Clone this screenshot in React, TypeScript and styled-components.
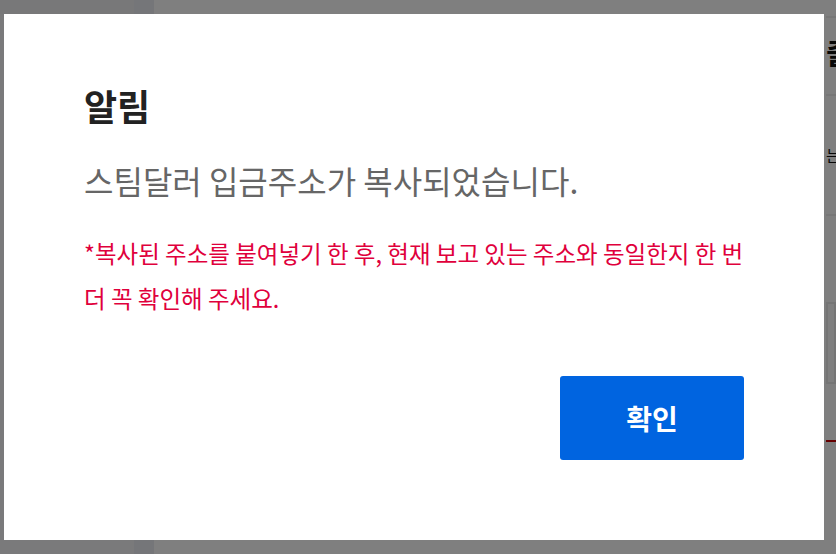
import React from "react";
import styled, { createGlobalStyle } from "styled-components";

const Global = createGlobalStyle`
  html, body { margin: 0; padding: 0; height: 100%; overflow: hidden; }
  body { font-family: "Noto Sans CJK KR", "Noto Sans", sans-serif; background: #fff; }
  #root { height: 100%; }
`;

const Page = styled.div`
  display: flex;
  height: 554px;
  width: 836px;
  overflow: hidden;
`;

const Sidebar = styled.div`
  width: 134px;
  flex: none;
  background: #f4f4f6;
  border-top: 14px solid #f0f0f2;
`;

const Gutter = styled.div`
  width: 20px;
  flex: none;
  background: #eaecf2;
`;

const Main = styled.div`
  flex: 1;
  display: flex;
  padding-left: 672px;
`;

const Panel = styled.div`
  width: 200px;
  flex: none;
  padding-top: 16px;
  display: flex;
  flex-direction: column;
`;

const HeadRow = styled.div`
  height: 80px;
  border-top: 2px solid #eee;
  border-bottom: 2px solid #eee;
  display: flex;
  align-items: center;
  font-size: 30px;
  font-weight: 700;
  color: #111;
  padding-bottom: 10px;
  box-sizing: border-box;
`;

const InfoRow = styled.div`
  height: 118px;
  border-bottom: 2px solid #eee;
  display: flex;
  align-items: center;
  font-size: 16px;
  color: #111;
`;

const BoxRow = styled.div`
  margin-top: 86px;
  height: 78px;
  border: 2px solid #eaeaea;
  border-right: none;
  display: flex;
`;

const BoxCell = styled.div`
  width: 6px;
  border-right: 2px solid #eaeaea;
`;

const RedLine = styled.div`
  margin-top: 56px;
  width: 20px;
  height: 2px;
  background: #c00;
`;

const Overlay = styled.div`
  position: fixed;
  inset: 0;
  background: rgba(0, 0, 0, 0.5);
  display: flex;
  align-items: center;
  justify-content: flex-start;
  padding-left: 4px;
`;

const Modal = styled.div`
  width: 820px;
  height: 526px;
  box-sizing: border-box;
  background: #fff;
  padding: 66px 80px 0 80px;
  display: flex;
  flex-direction: column;
`;

const Title = styled.h2`
  margin: 0;
  font-size: 36px;
  line-height: 50px;
  font-weight: 700;
  color: #222;
`;

const Message = styled.p`
  margin: 30px 0 0 0;
  font-size: 32px;
  line-height: 40px;
  color: #666;
`;

const Notice = styled.p`
  margin: 31px 0 0 0;
  font-size: 23.5px;
  line-height: 45px;
  color: #e0003c;
`;

const Actions = styled.div`
  display: flex;
  justify-content: flex-end;
  margin-top: 55px;
`;

const Button = styled.button`
  width: 184px;
  height: 84px;
  border: none;
  border-radius: 3px;
  background: #0064e0;
  color: #fff;
  font-family: inherit;
  font-size: 28px;
  font-weight: 700;
  cursor: pointer;
`;

export default function App() {
  return (
    <>
      <Global />
      <Page>
        <Sidebar />
        <Gutter />
        <Main>
          <Panel>
            <HeadRow>출금</HeadRow>
            <InfoRow>는</InfoRow>
            <BoxRow>
              <BoxCell />
            </BoxRow>
            <RedLine />
          </Panel>
        </Main>
      </Page>
      <Overlay>
        <Modal>
          <Title>알림</Title>
          <Message>스팀달러 입금주소가 복사되었습니다.</Message>
          <Notice>
            *복사된 주소를 붙여넣기 한 후, 현재 보고 있는 주소와 동일한지 한 번 더 꼭 확인해 주세요.
          </Notice>
          <Actions>
            <Button>확인</Button>
          </Actions>
        </Modal>
      </Overlay>
    </>
  );
}
